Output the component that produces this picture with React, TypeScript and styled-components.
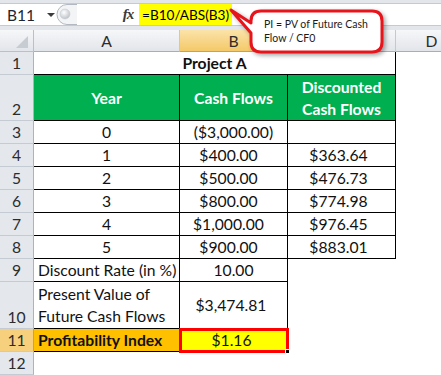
import React from 'react'
import styled, { createGlobalStyle, css } from 'styled-components'

const GlobalStyle = createGlobalStyle`
  body {
    margin: 0;
    background: #ffffff;
    font-family: Lato, 'Liberation Sans', sans-serif;
  }
`

const Window = styled.div`
  position: relative;
  width: 441px;
  height: 375px;
  overflow: hidden;
  background: #ffffff;
`

/* formula bar */

const Bar = styled.div`
  height: 30px;
  box-sizing: border-box;
  padding: 3px 0 4px;
  background: #e3e7ec;
`

const BarInner = styled.div`
  display: flex;
  align-items: stretch;
  height: 23px;
  box-sizing: border-box;
  border-top: 1px solid #c4cad2;
  border-bottom: 1px solid #c4cad2;
  background: #ffffff;
`

const NameBox = styled.div`
  display: flex;
  align-items: center;
  width: 55px;
  padding-left: 7px;
  box-sizing: border-box;
  font-size: 15.5px;
  color: #1e2530;
`

const DropArrow = styled.span`
  margin-left: 12px;
  width: 0;
  height: 0;
  border-left: 4px solid transparent;
  border-right: 4px solid transparent;
  border-top: 4px solid #3c3c3c;
`

const Grip = styled.svg`
  width: 22px;
  height: 21px;
  flex: none;
`

const FxButton = styled.div`
  display: flex;
  align-items: center;
  justify-content: center;
  width: 16px;
  margin-left: 43px;
  font-family: 'Liberation Serif', serif;
  font-style: italic;
  font-weight: bold;
  font-size: 15px;
  color: #3a3a3a;
  letter-spacing: -1px;
`

const Formula = styled.div`
  display: flex;
  align-items: center;
  margin-left: 3px;
  padding-left: 3px;
  width: 93px;
  box-sizing: border-box;
  background: #ffff00;
  font-size: 13.6px;
  color: #000000;
  white-space: nowrap;
`

/* callout */

const Callout = styled.div`
  position: absolute;
  left: 226px;
  top: 6px;
  width: 165px;
  height: 55px;
  z-index: 5;
`

const CalloutShape = styled.svg`
  display: block;
  filter: drop-shadow(2px 2px 2px rgba(0, 0, 0, 0.35));
`

const CalloutText = styled.div`
  position: absolute;
  left: 38px;
  top: 11px;
  font-size: 10.5px;
  line-height: 14px;
  color: #1a1a1a;
`

/* sheet */

const Sheet = styled.div`
  display: grid;
  grid-template-columns: 34px 146px 108px 108px 72px;
  grid-template-rows: 22px 23px 46px repeat(7, 23px) 47px 23px 23px;
  font-size: 15.7px;
  color: #111111;
`

const headerBase = css<{ $active?: boolean }>`
  display: flex;
  box-sizing: border-box;
  color: #2c2c2c;
  background: ${p =>
    p.$active ? 'linear-gradient(#fbe3a9, #f4c969)' : 'linear-gradient(#f6f7f9, #e2e5ea)'};
`

const Corner = styled.div`
  ${headerBase};
  position: relative;
  border-right: 1px solid #b9c0c9;
  border-bottom: 1px solid #b9c0c9;
  align-items: flex-end;
  justify-content: flex-end;
  padding: 0 5px 3px 0;
`

const ColHeader = styled.div<{ $active?: boolean }>`
  ${headerBase};
  align-items: center;
  justify-content: center;
  border-right: 1px solid ${p => (p.$active ? '#d2b06a' : '#c3c9d1')};
  border-bottom: 1px solid ${p => (p.$active ? '#c9a14f' : '#9fb0c4')};
`

const RowHeader = styled.div<{ $active?: boolean }>`
  display: flex;
  align-items: flex-end;
  justify-content: center;
  padding-bottom: 2px;
  box-sizing: border-box;
  color: #2c2c2c;
  background: ${p => (p.$active ? '#f6d07d' : '#e4e7ec')};
  border-right: 1px solid ${p => (p.$active ? '#c9a14f' : '#a9b4c2')};
  border-bottom: 1px solid #c5cbd3;
`

type Align = 'left' | 'center'

const Cell = styled.div<{
  $align?: Align
  $bg?: string
  $bold?: boolean
  $light?: boolean
  $r?: boolean
  $b?: boolean
  $span?: number
  $pad?: number
  $selected?: boolean
}>`
  position: relative;
  display: flex;
  flex-direction: column;
  justify-content: center;
  align-items: ${p => (p.$align === 'left' ? 'flex-start' : 'center')};
  text-align: ${p => p.$align || 'center'};
  box-sizing: border-box;
  padding: 0 ${p => p.$pad || 0}px 0 ${p => (p.$align === 'left' ? 4 : 0)}px;
  line-height: 22px;
  white-space: nowrap;
  background: ${p => p.$bg || 'transparent'};
  font-weight: ${p => (p.$bold ? 700 : 400)};
  color: ${p => (p.$light ? '#ffffff' : '#111111')};
  border-right: ${p => (p.$r ? '1px solid #000000' : 'none')};
  border-bottom: ${p => (p.$b ? '1px solid #000000' : 'none')};
  ${p => p.$span && `grid-column: span ${p.$span};`}
  ${p =>
    p.$selected &&
    css`
      outline: 3px solid #ff0000;
      outline-offset: -2px;
      z-index: 2;
      &::after {
        content: '';
        position: absolute;
        right: -3px;
        bottom: -3px;
        width: 5px;
        height: 5px;
        background: #000000;
        border: 1px solid #ffffff;
        box-sizing: border-box;
      }
    `}
`

const GREEN = '#00b050'

const cashRows = [
  { year: '0', cash: '($3,000.00)', disc: '', neg: true },
  { year: '1', cash: '$400.00', disc: '$363.64' },
  { year: '2', cash: '$500.00', disc: '$476.73' },
  { year: '3', cash: '$800.00', disc: '$774.98' },
  { year: '4', cash: '$1,000.00', disc: '$976.45' },
  { year: '5', cash: '$900.00', disc: '$883.01' },
]

export default function App() {
  return (
    <Window>
      <GlobalStyle />
      <Bar>
        <BarInner>
          <NameBox>
            B11
            <DropArrow />
          </NameBox>
          <Grip viewBox="0 0 22 21">
            <defs>
              <radialGradient id="knob" cx="0.4" cy="0.35" r="0.7">
                <stop offset="0" stopColor="#ffffff" />
                <stop offset="1" stopColor="#b9bec5" />
              </radialGradient>
            </defs>
            <path d="M22 0.5 H12 A10 10 0 0 0 12 20.5 H22" fill="#f3f4f6" stroke="#b3b9c1" />
            <circle cx="10" cy="10" r="5" fill="url(#knob)" stroke="#c8ccd2" strokeWidth="0.6" />
          </Grip>
          <FxButton>fx</FxButton>
          <Formula>=B10/ABS(B3)</Formula>
        </BarInner>
      </Bar>

      <Callout>
        <CalloutShape width="165" height="55" viewBox="0 0 165 55">
          <path
            d="M35 5 H146 Q156 5 156 15 V36 Q156 46 146 46 H35 Q25 46 25 36 V27 L5 4 L25 17 V15 Q25 5 35 5 Z"
            fill="#ffffff"
            stroke="#e8141c"
            strokeWidth="3"
            strokeLinejoin="round"
          />
        </CalloutShape>
        <CalloutText>
          PI = PV of Future Cash
          <br />
          Flow / CF0
        </CalloutText>
      </Callout>

      <Sheet>
        <Corner>
          <svg width="12" height="12" viewBox="0 0 12 12">
            <polygon points="12,0 12,12 0,12" fill="#c7ccd3" />
          </svg>
        </Corner>
        <ColHeader>A</ColHeader>
        <ColHeader $active>B</ColHeader>
        <ColHeader>C</ColHeader>
        <ColHeader>D</ColHeader>

        <RowHeader>1</RowHeader>
        <Cell $span={3} $bold $r $b>
          Project A
        </Cell>
        <Cell />

        <RowHeader>2</RowHeader>
        <Cell $bg={GREEN} $bold $light $r $b>
          Year
        </Cell>
        <Cell $bg={GREEN} $bold $light $r $b>
          Cash Flows
        </Cell>
        <Cell $bg={GREEN} $bold $light $r $b>
          <span>Discounted</span>
          <span>Cash Flows</span>
        </Cell>
        <Cell />

        {cashRows.map((row, i) => (
          <React.Fragment key={row.year}>
            <RowHeader>{i + 3}</RowHeader>
            <Cell $r $b>
              {row.year}
            </Cell>
            <Cell $r $b $pad={row.neg ? 0 : 10}>
              {row.cash}
            </Cell>
            <Cell $r $b $pad={6}>
              {row.disc}
            </Cell>
            <Cell />
          </React.Fragment>
        ))}

        <RowHeader>9</RowHeader>
        <Cell $align="left" $r $b>
          Discount Rate (in %)
        </Cell>
        <Cell $r $b>
          10.00
        </Cell>
        <Cell />
        <Cell />

        <RowHeader>10</RowHeader>
        <Cell $align="left" $r $b>
          <span>Present Value of</span>
          <span>Future Cash Flows</span>
        </Cell>
        <Cell $r $b $pad={5}>
          $3,474.81
        </Cell>
        <Cell />
        <Cell />

        <RowHeader $active>11</RowHeader>
        <Cell $align="left" $bg="#ffc000" $bold $r $b>
          Profitability Index
        </Cell>
        <Cell $bg="#ffff00" $r $b $pad={4} $selected>
          $1.16
        </Cell>
        <Cell />
        <Cell />

        <RowHeader>12</RowHeader>
        <Cell />
        <Cell />
        <Cell />
        <Cell />
      </Sheet>
    </Window>
  )
}
